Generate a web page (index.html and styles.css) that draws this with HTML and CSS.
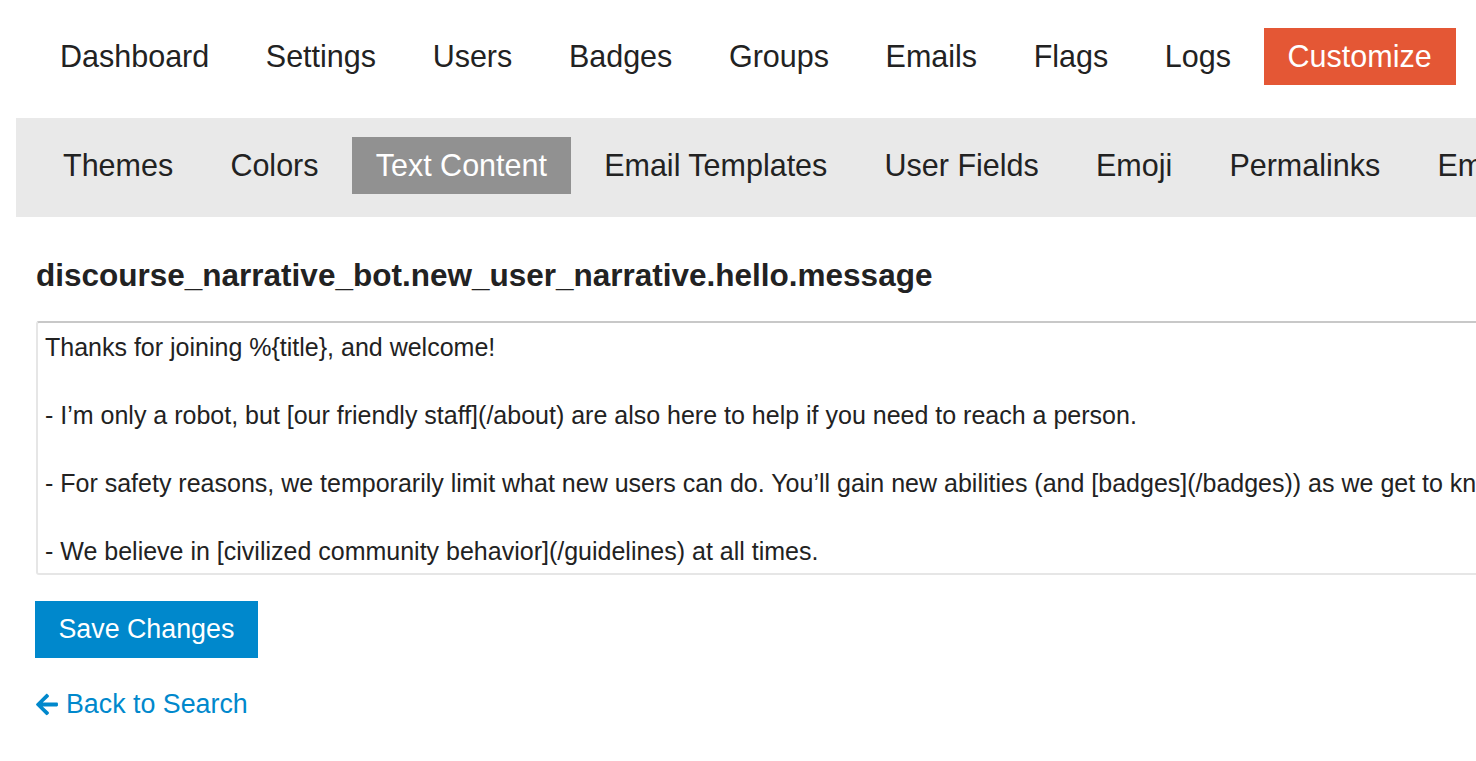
FILE: index.html
```html
<!DOCTYPE html>
<html>
<head>
<meta charset="utf-8">
<link rel="stylesheet" href="styles.css">
</head>
<body>
<nav class="top-nav">
  <ul class="nav-list">
    <li class="nav-item">Dashboard</li>
    <li class="nav-item">Settings</li>
    <li class="nav-item">Users</li>
    <li class="nav-item">Badges</li>
    <li class="nav-item">Groups</li>
    <li class="nav-item">Emails</li>
    <li class="nav-item">Flags</li>
    <li class="nav-item">Logs</li>
    <li class="nav-item nav-active">Customize</li>
  </ul>
</nav>
<nav class="sub-nav">
  <ul class="nav-list sub-list">
    <li class="nav-item">Themes</li>
    <li class="nav-item">Colors</li>
    <li class="nav-item sub-active">Text Content</li>
    <li class="nav-item">Email Templates</li>
    <li class="nav-item">User Fields</li>
    <li class="nav-item">Emoji</li>
    <li class="nav-item">Permalinks</li>
    <li class="nav-item">Embedding</li>
  </ul>
</nav>
<main class="content">
  <h3 class="key-title">discourse_narrative_bot.new_user_narrative.hello.message</h3>
  <textarea class="editor" wrap="off">Thanks for joining %{title}, and welcome!

- I’m only a robot, but [our friendly staff](/about) are also here to help if you need to reach a person.

- For safety reasons, we temporarily limit what new users can do. You’ll gain new abilities (and [badges](/badges)) as we get to know you.

- We believe in [civilized community behavior](/guidelines) at all times.</textarea>
  <div class="actions">
    <button class="btn-save">Save Changes</button>
  </div>
  <a class="back-link" href="#"><svg class="back-icon" viewBox="0 0 448 512"><path d="M257.5 445.1l-22.2 22.2c-9.4 9.4-24.6 9.4-33.9 0L7 273c-9.4-9.4-9.4-24.6 0-33.9L201.4 44.7c9.4-9.4 24.6-9.4 33.9 0l22.2 22.2c9.5 9.5 9.3 25-.4 34.3L136.6 216H424c13.3 0 24 10.7 24 24v32c0 13.3-10.7 24-24 24H136.6l120.5 114.8c9.8 9.3 10 24.8.4 34.3z"/></svg>Back to Search</a>
</main>
</body>
</html>
```
FILE: styles.css
```css
html, body {
  margin: 0;
  padding: 0;
  overflow: hidden;
  background: #fff;
}
body {
  font-family: "Liberation Sans", Arial, sans-serif;
  color: #222;
  width: 1476px;
}
.nav-list {
  list-style: none;
  margin: 0;
  padding: 0;
  display: flex;
  gap: 8.6px;
  white-space: nowrap;
}
.sub-list {
  gap: 9.2px;
}
.nav-item {
  font-size: 30.5px;
  height: 57px;
  line-height: 57px;
  padding: 0 24px;
  flex: none;
}
.top-nav {
  padding: 28px 0 0 36px;
}
.nav-active {
  background: #e45735;
  color: #fff;
}
.sub-nav {
  margin: 33px 0 0 16px;
  background: #e9e9e9;
  padding: 19px 0 23px 23px;
  width: 1600px;
}
.sub-active {
  background: #919191;
  color: #fff;
}
.content {
  padding-left: 36px;
}
.key-title {
  font-size: 31.5px;
  line-height: 36px;
  font-weight: bold;
  margin: 40px 0 28px;
}
.editor {
  display: block;
  box-sizing: border-box;
  width: 1700px;
  height: 254px;
  margin: 0;
  padding: 7px 7px;
  font-family: "Liberation Sans", Arial, sans-serif;
  font-size: 25px;
  line-height: 34px;
  color: #222;
  border: 2px solid #e6e6e6;
  border-top-color: #c8c8c8;
  border-radius: 3px;
  resize: none;
  overflow: hidden;
  white-space: pre;
  outline: none;
}
.actions {
  margin-top: 26px;
}
.btn-save {
  font-family: "Liberation Sans", Arial, sans-serif;
  font-size: 26.8px;
  height: 57px;
  padding: 0 23.5px;
  margin-left: -1px;
  background: #0088cc;
  color: #fff;
  border: none;
  border-radius: 0;
}
.back-link {
  display: inline-flex;
  align-items: center;
  gap: 8px;
  margin-top: 31px;
  font-size: 26.8px;
  line-height: 30px;
  color: #0088cc;
  text-decoration: none;
}
.back-icon {
  width: 22px;
  height: 25px;
  fill: #0088cc;
}
```
